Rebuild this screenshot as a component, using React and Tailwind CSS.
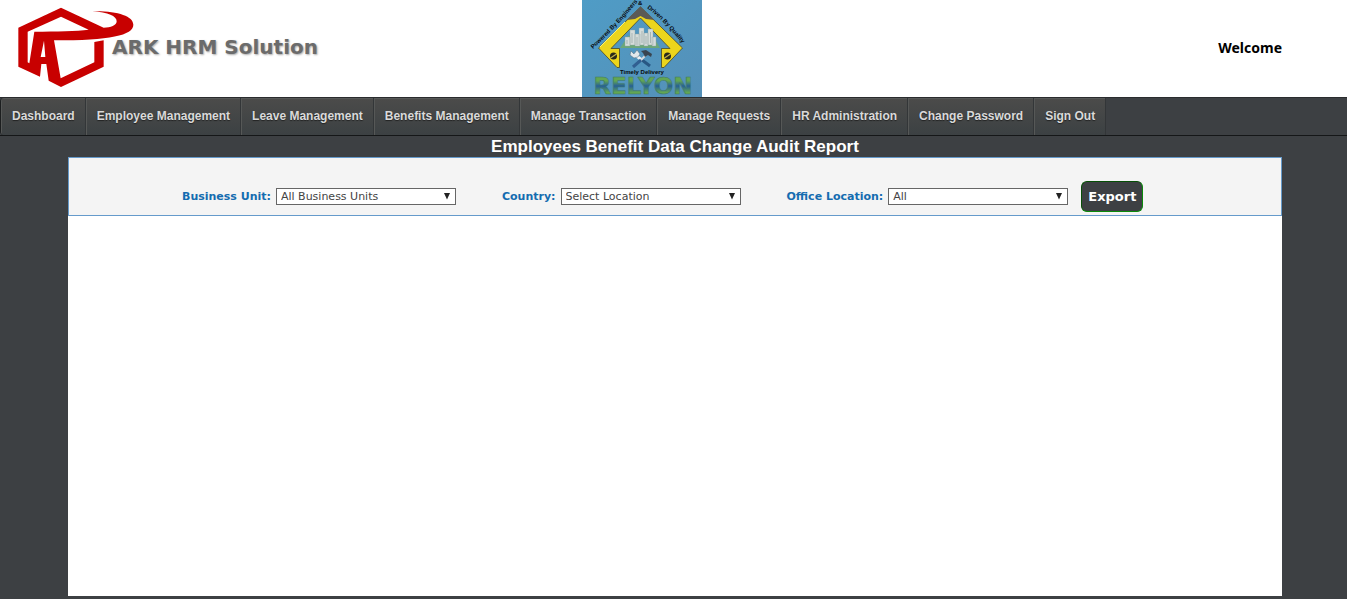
import React from "react";

const menu = [
  "Dashboard",
  "Employee Management",
  "Leave Management",
  "Benefits Management",
  "Manage Transaction",
  "Manage Requests",
  "HR Administration",
  "Change Password",
  "Sign Out",
];

function ArkLogo() {
  return (
    <div className="flex items-center pl-4">
      <svg viewBox="48 0 360 291" className="h-[97px] w-[120px] shrink-0" aria-hidden="true">
        <path
          fill="#c80000"
          fillRule="evenodd"
          d="M183 23 L55 83 V200 L120 230 L124 192 H139 L146 242 L183 261 L311 200 V121 L283 126 V187 L182 235 L162 121 C330 121 400 106 400 74 C400 48 350 32 277 34 C325 38 350 48 350 64 C350 76 332 83 311 83 Z M183 50 L266 89 C230 94 170 94 103 95 L88 190 L83 187 V95 Z M132 122 L136 171 H122 Z"
        />
      </svg>
      <span className="-ml-6 pb-1 font-['DejaVu_Sans',sans-serif] text-[20px] leading-6 font-bold whitespace-nowrap text-[#6b6b6b] [text-shadow:1px_1px_2px_#aaa]">
        ARK HRM Solution
      </span>
    </div>
  );
}

function RelyonLogo() {
  return (
    <svg viewBox="0 0 120 97" className="h-[97px] w-[120px] overflow-visible" role="img" aria-label="Relyon">
      <defs>
        <linearGradient id="sky" x1="0" y1="0" x2="1" y2="1">
          <stop offset="0" stopColor="#4f9cc6" />
          <stop offset="1" stopColor="#5590b8" />
        </linearGradient>
        <linearGradient id="word" x1="0" y1="0" x2="0" y2="1">
          <stop offset="0.3" stopColor="#62a653" />
          <stop offset="0.5" stopColor="#265f96" />
          <stop offset="0.75" stopColor="#62a653" />
        </linearGradient>
        <path id="leftSlope" d="M11 49 Q33 29 57 0" />
        <path id="rightSlope" d="M65 8 Q84 22 105 50" />
      </defs>
      <rect width="120" height="97" fill="url(#sky)" />
      <path d="M58.500 7 L16.500 48 L35 67.500 H37.500 V48.500 H29 L58.500 18 L88 48.500 H79.500 V67.500 H82 L100.500 48 Z" fill="#ecd51c" stroke="#4a4724" strokeWidth="0.8" />
      <path d="M58.500 6.500 L44.500 20 L53 19 L58.500 16 L64 19 L72.500 20 Z" fill="#5b5a56" />
      <path d="M43 22 L18 47" fill="none" stroke="#fff56c" strokeWidth="1" />
      <path d="M46 36 H71 L78 48 H38 Z" fill="#6ba779" />
      <g fill="#d5dcda" stroke="#8fa3a4" strokeWidth="0.4">
        <path d="M43 37h5v9h-5z M48 30h5v15h-5z M53 34h5v12h-5z M57 28h5v17h-5z M62 33h4v13h-4z M66 29h5v16h-5z M70 37h4v9h-4z" />
      </g>
      <path d="M45 40v4 M50 33v10 M55 37v8 M60 31v12 M64 36v8 M68.500 32v11" stroke="#a7b5b5" strokeWidth="1" />
      <path d="M52 54 L61 61" stroke="#eef2f5" strokeWidth="3" />
      <path d="M60 60 L68 66" stroke="#285783" strokeWidth="3" />
      <path d="M49 51 L52 54 L55 50 L58 54 L56 57 L52 58 L48 55 Z" fill="#e3e8eb" stroke="#516879" strokeWidth="0.5" />
      <path d="M65 54 L59 60" stroke="#d5dade" strokeWidth="2" />
      <path d="M59 60 L51 67" stroke="#315f91" strokeWidth="3" />
      <path d="M59 51 L64 50 L70 54 L69 57 L66 55 L63 57 L61 53 Z" fill="#394550" />
      {[31.5, 85.5].map((x) => (
        <g key={x}>
          <circle cx={x} cy="56" r="3.500" fill="#29291b" />
          <path d={`M${x - 3} 58 L${x + 3} 54`} stroke="#c8b646" strokeWidth="1.2" />
        </g>
      ))}
      <g className="font-['Liberation_Sans',sans-serif] text-[6px] font-bold" fill="#07090c">
        <text><textPath href="#leftSlope">Powered By Engineers</textPath></text>
        <text x="56" y="5">&amp;</text>
        <text><textPath href="#rightSlope">Driven By Quality</textPath></text>
        <text x="60" y="74" textAnchor="middle">Timely Delivery</text>
      </g>
      <text x="61" y="94" textAnchor="middle" fill="url(#word)" stroke="#3d7768" strokeWidth="0.5" className="font-['DejaVu_Sans',sans-serif] text-[23px] font-bold">
        RELYON
      </text>
    </svg>
  );
}

function Filter({ id, label, option }) {
  return (
    <div className="flex items-center gap-[5px]">
      <label htmlFor={id} className="text-[11px] leading-4 font-bold whitespace-nowrap text-[#146cb0]">
        {label}
      </label>
      <div className="grid w-[180px] items-center">
        <select
          id={id}
          className="col-start-1 row-start-1 h-[17px] w-full appearance-none rounded-none border border-[#666] bg-white px-1 text-[11px] leading-[15px] text-[#444]"
        >
          <option>{option}</option>
        </select>
        <svg viewBox="0 0 8 7" className="pointer-events-none col-start-1 row-start-1 mr-[5px] h-[7px] w-[8px] justify-self-end" aria-hidden="true">
          <path d="M1 0H7L4 6.500Z" fill="#222" />
        </svg>
      </div>
    </div>
  );
}

export default function App() {
  return (
    <div className="flex min-h-screen flex-col bg-[#3d4043] pb-[3px] font-['DejaVu_Sans',sans-serif]">
      <header className="grid grid-cols-[582px_1fr_auto] items-center bg-white pr-[65px]">
        <ArkLogo />
        <RelyonLogo />
        <span className="pb-[2px] font-['Noto_Sans',sans-serif] text-[14px] leading-5 font-bold text-black">Welcome</span>
      </header>

      <nav className="border-t border-b border-t-[#2a2c2e] border-b-[#151718]">
        <ul className="flex overflow-hidden rounded-l border-l border-l-[#1c1e1f]">
          {menu.map((item) => (
            <li key={item} className="border-r border-r-[#333638]">
              <a
                href="#"
                className="block border-t border-l border-[#565857] bg-linear-to-b from-[#4b4b4a] to-[#3c4143] px-[10px] pt-[9px] pb-[11px] font-['Liberation_Sans',sans-serif] text-[12px] leading-4 font-bold whitespace-nowrap text-[#dadada] [text-shadow:0_1px_1px_#222]"
              >
                {item}
              </a>
            </li>
          ))}
        </ul>
      </nav>

      <main className="mr-[65px] ml-[68px] flex flex-1 flex-col">
        <h1 className="text-center font-['Liberation_Sans',sans-serif] text-[17px] leading-[21px] font-bold text-white">
          Employees Benefit Data Change Audit Report
        </h1>
        <form className="flex items-center border border-[#659acb] bg-[#f4f4f4] pt-[23px] pb-[3px] pl-[113px]">
          <div className="flex items-center gap-[46px]">
            <Filter id="unit" label="Business Unit:" option="All Business Units" />
            <Filter id="country" label="Country:" option="Select Location" />
            <Filter id="office" label="Office Location:" option="All" />
          </div>
          <button
            type="button"
            className="ml-[13px] rounded-md border border-t-[#064f06] border-r-[#0a8a0a] border-b-[#0a8a0a] border-l-[#064f06] bg-[#3d4043] px-[6px] pt-[5px] pb-1 text-[13px] leading-5 font-bold text-white"
          >
            Export
          </button>
        </form>
        <section className="flex-1 bg-white" aria-label="Report" />
      </main>
    </div>
  );
}
